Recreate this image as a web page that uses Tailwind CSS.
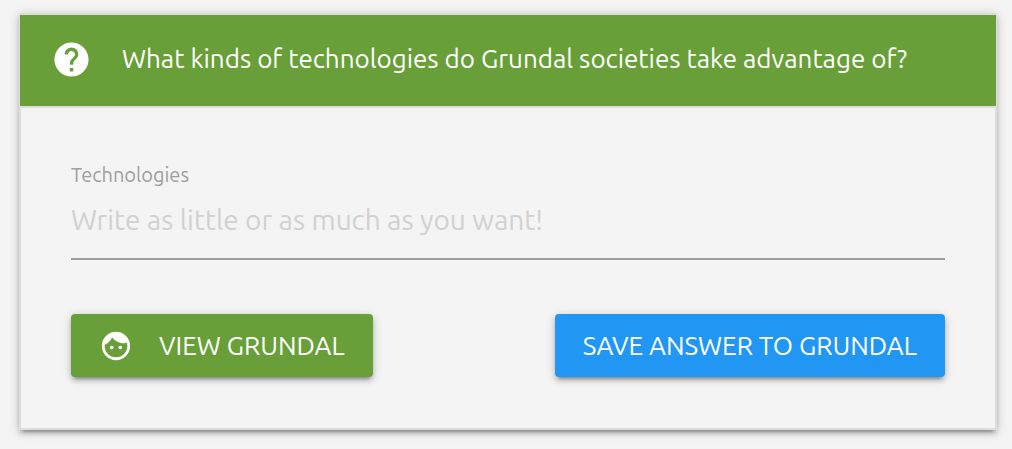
<!DOCTYPE html>
<html lang="en">
<head>
<meta charset="utf-8">
<meta name="viewport" content="width=device-width, initial-scale=1">
<title>Grundal technologies</title>
<script src="https://cdn.jsdelivr.net/npm/@tailwindcss/browser@4"></script>
</head>
<body class="bg-[#f4f4f4] pl-[19px] pr-[15px] pt-[13px] pb-[18px] font-[Ubuntu,'Noto_Sans',sans-serif]">
<main class="border-2 border-[#dddddd] shadow-[0_4px_4px_0_rgba(0,0,0,0.14),0_6px_2px_-4px_rgba(0,0,0,0.2),0_2px_10px_0_rgba(0,0,0,0.2)]">
  <header class="-mx-px flex items-center gap-[30px] border-b-2 border-[#dddddd] bg-[#689f38] px-[31px] pt-6 pb-[26px] text-white">
    <svg class="size-[41px] shrink-0" viewBox="0 0 24 24" fill="currentColor" aria-hidden="true"><path d="M12 2C6.480 2 2 6.480 2 12s4.480 10 10 10 10-4.480 10-10S17.520 2 12 2zm1 17h-2v-2h2v2zm2.070-7.750l-.9.920C13.450 12.900 13 13.500 13 15h-2v-.5c0-1.100.45-2.100 1.170-2.830l1.240-1.260c.37-.36.59-.86.59-1.410 0-1.100-.9-2-2-2s-2 .9-2 2H8c0-2.210 1.790-4 4-4s4 1.790 4 4c0 .88-.36 1.680-.93 2.250z"/></svg>
    <h1 class="pb-0.5 text-[26px] leading-9">What kinds of technologies do Grundal societies take advantage of?</h1>
  </header>
  <form class="px-[50px] pt-[52px] pb-[51px]">
    <label for="technologies" class="block text-[20px] leading-[30px] text-[#9e9e9e]">Technologies</label>
    <input id="technologies" type="text" placeholder="Write as little or as much as you want!" class="block h-[70px] w-full border-b-2 border-[#9e9e9e] bg-transparent pb-2.5 text-[28px] text-[#424242] outline-none placeholder:text-[#d1d1d1]">
    <div class="mt-[54px] flex flex-wrap items-center justify-between gap-4">
      <button type="button" class="flex h-[63px] items-center gap-[26px] rounded bg-[#689f38] px-7 text-[26px] text-white uppercase shadow-[0_4px_4px_0_rgba(0,0,0,0.14),0_6px_2px_-4px_rgba(0,0,0,0.2),0_2px_10px_0_rgba(0,0,0,0.2)]">
        <svg class="size-[34px] shrink-0" viewBox="0 0 24 24" fill="currentColor" aria-hidden="true"><path d="M9 11.750c-.69 0-1.250.56-1.250 1.250s.56 1.250 1.250 1.250 1.250-.56 1.250-1.250-.56-1.250-1.250-1.250zm6 0c-.69 0-1.250.56-1.250 1.250s.56 1.250 1.250 1.250 1.250-.56 1.250-1.250-.56-1.250-1.250-1.250zM12 2C6.480 2 2 6.480 2 12s4.480 10 10 10 10-4.480 10-10S17.520 2 12 2zm0 18c-4.410 0-8-3.590-8-8 0-.29.02-.58.05-.86 2.360-1.050 4.230-2.980 5.210-5.370C11.070 8.330 14.050 10 17.420 10c.78 0 1.530-.09 2.250-.26.21.71.33 1.470.33 2.260 0 4.410-3.590 8-8 8z"/></svg>
        <span>View Grundal</span>
      </button>
      <button type="submit" class="h-[63px] rounded bg-[#2196f3] px-7 text-[26px] text-white uppercase shadow-[0_4px_4px_0_rgba(0,0,0,0.14),0_6px_2px_-4px_rgba(0,0,0,0.2),0_2px_10px_0_rgba(0,0,0,0.2)]">Save answer to Grundal</button>
    </div>
  </form>
</main>
</body>
</html>
